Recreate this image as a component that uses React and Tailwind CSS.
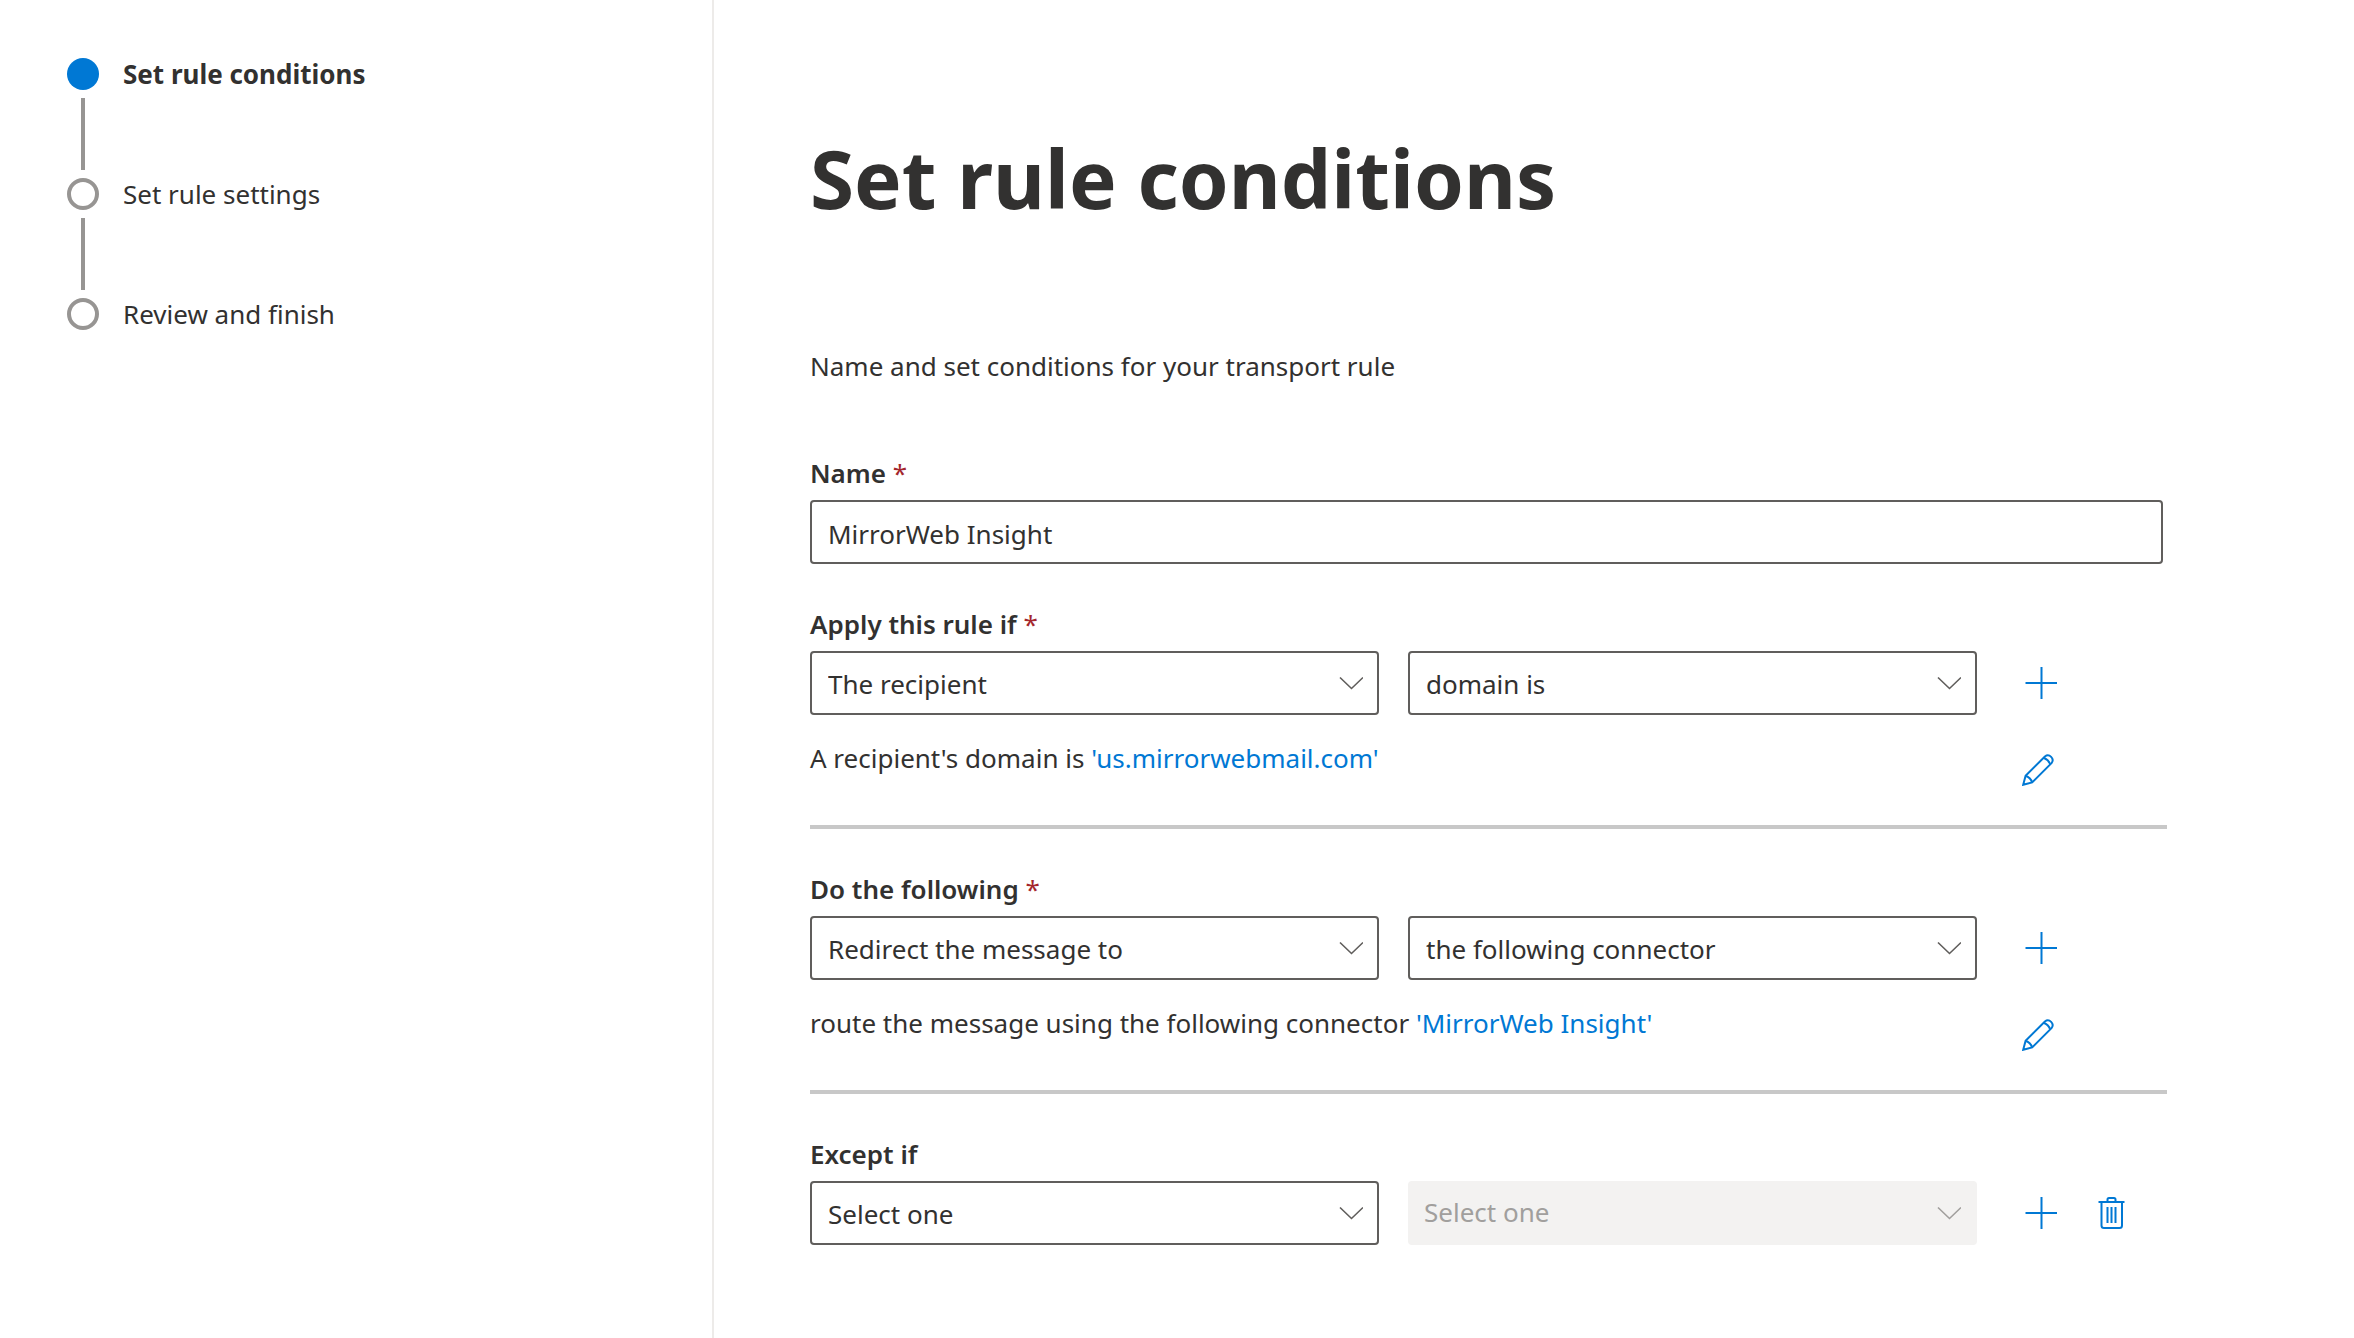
import React from "react";

const steps = [
  { label: "Set rule conditions", current: true },
  { label: "Set rule settings", current: false },
  { label: "Review and finish", current: false },
];

function ChevronDown({ className }) {
  return (
    <svg viewBox="0 0 24 24" className={`pointer-events-none absolute top-5 right-4 size-6 ${className}`} fill="none" stroke="currentColor" strokeWidth="1.6" aria-hidden="true">
      <path d="M1 6.5 L12.5 17.5 L24 6.5" />
    </svg>
  );
}

function AddIcon() {
  return (
    <svg viewBox="0 0 32 32" className="size-8" fill="none" stroke="currentColor" strokeWidth="2" aria-hidden="true">
      <path d="M16.5 0V32M0.5 16H32.5" />
    </svg>
  );
}

function PencilIcon() {
  return (
    <svg viewBox="0 0 32 32" className="size-8" fill="none" stroke="currentColor" strokeWidth="2" aria-hidden="true">
      <path d="M1.2 30.8 L3.6 21.8 L22.9 2.5 A4.7 4.7 0 0 1 29.5 9.1 L10.2 28.4 Z" />
      <path d="M21.6 3.8 Q26.4 5.6 28.2 10.4" />
      <path d="M3.6 21.8 Q8.4 23.6 10.2 28.4" />
    </svg>
  );
}

function TrashIcon() {
  return (
    <svg viewBox="0 0 32 32" className="size-8" fill="none" stroke="currentColor" strokeWidth="2" aria-hidden="true">
      <path d="M2.5 5H28.5" />
      <path d="M11.5 5V2.5Q11.5 1 13 1H18Q19.500 1 19.500 2.500V5" />
      <path d="M5.5 5V28.5Q5.5 31 8 31H23.500Q26 31 26 28.5V5" />
      <path d="M11.5 10V26M15.5 10V26M19.5 10V26" />
    </svg>
  );
}

function IconButton({ label, children }) {
  return (
    <button type="button" aria-label={label} className="size-8 text-[#0078d4]">
      {children}
    </button>
  );
}

function Dropdown({ id, label, value, disabled }) {
  return (
    <div className="relative mr-[29px]">
      <select
        id={id}
        aria-label={label}
        disabled={disabled}
        defaultValue={value}
        className={
          disabled
            ? "block h-16 w-full appearance-none rounded-sm bg-[#f3f2f1] px-4 pb-0.5 text-[26px] text-[#a19f9d] opacity-100"
            : "block h-16 w-full appearance-none rounded-sm border-2 border-[#605e5c] bg-white px-4 pt-0.5 text-[26px]"
        }
      >
        <option>{value}</option>
      </select>
      <ChevronDown className={disabled ? "text-[#a19f9d]" : "text-[#605e5c]"} />
    </div>
  );
}

function FieldLabel({ htmlFor, required, children }) {
  return (
    <label htmlFor={htmlFor} className="mb-[7px] block text-[26px] leading-10 font-semibold">
      {children}
      {required && <span className="font-normal text-[#a4262c]"> *</span>}
    </label>
  );
}

function RuleSection({ id, title, required, first, second, secondDisabled, text, link, removable }) {
  return (
    <section className="pt-10">
      <FieldLabel htmlFor={id} required={required}>{title}</FieldLabel>
      <div className="grid grid-cols-[1fr_1fr_161px] items-center">
        <Dropdown id={id} value={first} />
        <Dropdown id={`${id}-detail`} label={`${title} detail`} value={second} disabled={secondDisabled} />
        <div className="flex gap-[39px] pl-[19px]">
          <IconButton label="Add condition"><AddIcon /></IconButton>
          {removable && <IconButton label="Delete condition"><TrashIcon /></IconButton>}
        </div>
      </div>
      {text && (
        <div className="mt-[23px] grid grid-cols-[1fr_161px] border-b-4 border-[#c8c8c8] pb-[39px]">
          <p className="leading-10">
            {text} <a href="#" className="text-[#0078d4]">{link}</a>
          </p>
          <div className="flex pt-4 pl-4">
            <IconButton label="Edit"><PencilIcon /></IconButton>
          </div>
        </div>
      )}
    </section>
  );
}

export default function App() {
  return (
    <div className="flex min-h-screen bg-white font-['Noto_Sans',sans-serif] text-[26px] text-[#323130]">
      <nav aria-label="Steps" className="w-[714px] shrink-0 border-r-2 border-[#edebe9] px-[67px] pt-[58px]">
        <ol>
          {steps.map((step, i) => (
            <li key={step.label} className="flex gap-6">
              <div className="flex w-8 flex-col items-center gap-2 pb-2">
                <span className={step.current ? "size-8 rounded-full bg-[#0078d4]" : "size-8 rounded-full border-4 border-[#979593]"} />
                {i < steps.length - 1 && <span className="h-[72px] w-1 bg-[#979593]" />}
              </div>
              <span aria-current={step.current ? "step" : undefined} className={step.current ? "leading-8 font-bold" : "leading-8"}>
                {step.label}
              </span>
            </li>
          ))}
        </ol>
      </nav>
      <main className="min-w-0 flex-1 pt-[124px] pr-[187px] pb-16 pl-24">
        <h1 className="text-[80px] leading-[108px] font-bold">Set rule conditions</h1>
        <p className="mt-[114px] leading-10">Name and set conditions for your transport rule</p>
        <form className="pt-[67px]">
          <FieldLabel htmlFor="rule-name" required>Name</FieldLabel>
          <div className="pr-1">
            <input
              id="rule-name"
              type="text"
              defaultValue="MirrorWeb Insight"
              className="block h-16 w-full rounded-sm border-2 border-[#605e5c] bg-white px-4 pt-1 text-[26px]"
            />
          </div>
          <RuleSection id="apply-if" title="Apply this rule if" required first="The recipient" second="domain is" text="A recipient's domain is" link="'us.mirrorwebmail.com'" />
          <RuleSection id="do-following" title="Do the following" required first="Redirect the message to" second="the following connector" text="route the message using the following connector" link="'MirrorWeb Insight'" />
          <RuleSection id="except-if" title="Except if" first="Select one" second="Select one" secondDisabled removable />
        </form>
      </main>
    </div>
  );
}
